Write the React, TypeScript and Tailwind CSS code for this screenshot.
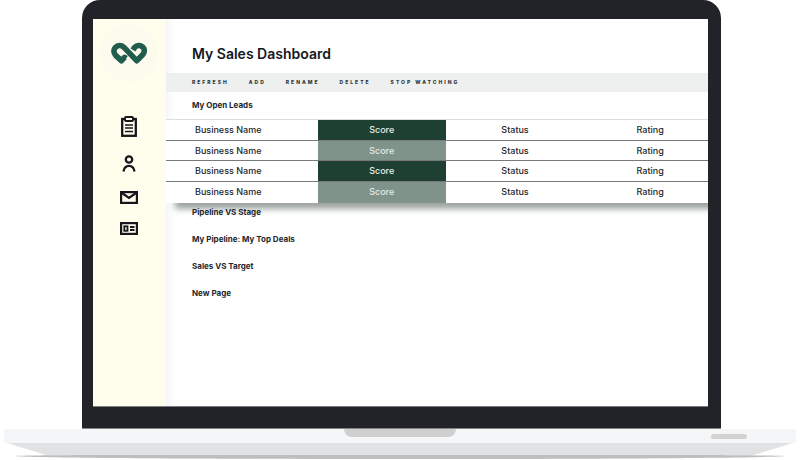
import React from "react";

const actions = ["Refresh", "Add", "Rename", "Delete", "Stop watching"];
const pages = ["Pipeline VS Stage", "My Pipeline: My Top Deals", "Sales VS Target", "New Page"];
const rows = [0, 1, 2, 3];

function Logo() {
  return (
    <svg width="36" height="22" viewBox="0 0 108 66" fill="none" stroke="#215c4d" strokeWidth="17" aria-label="Company logo" role="img">
      <path d="M46 49 L41 46 L31 56 L14 40 C-1 23 20 0 39 16 L77 56 L95 38 C110 20 87 0 70 17 L66 24" strokeLinejoin="round" />
    </svg>
  );
}

function ClipboardIcon() {
  return (
    <svg width="16" height="21" viewBox="0 0 16 21" fill="none" stroke="#15171c" aria-hidden="true">
      <rect x="1.200" y="3" width="13.600" height="16.800" strokeWidth="2.300" />
      <rect x="4" y="1" width="8" height="4" rx="1" fill="#fffdeb" strokeWidth="1.900" />
      <path d="M4 9h8M4 12h8M4 15.500h8" strokeWidth="1.600" />
    </svg>
  );
}

function PersonIcon() {
  return (
    <svg width="14" height="17" viewBox="0 0 14 17" fill="none" stroke="#15171c" strokeWidth="2.300" aria-hidden="true">
      <circle cx="7" cy="4.500" r="3.200" />
      <path d="M1.500 16.500 C2.500 9 11.500 9 12.500 16.500" />
    </svg>
  );
}

function MailIcon() {
  return (
    <svg width="18" height="13" viewBox="0 0 18 13" fill="none" stroke="#15171c" strokeWidth="2.200" aria-hidden="true">
      <rect x="1.100" y="1.100" width="15.800" height="10.800" />
      <path d="M2 2 L9 7 L16 2" />
    </svg>
  );
}

function CardIcon() {
  return (
    <svg width="18" height="13" viewBox="0 0 18 13" fill="none" stroke="#15171c" aria-hidden="true">
      <rect x="1.100" y="1.100" width="15.800" height="10.800" strokeWidth="2.200" />
      <rect x="4.300" y="4.300" width="3.200" height="4.500" strokeWidth="1.800" />
      <path d="M10 5h4.500M10 8h4.500" strokeWidth="1.800" />
    </svg>
  );
}

function Sidebar() {
  return (
    <aside className="flex w-[73px] shrink-0 flex-col items-center bg-[#fffdeb] pt-[5px] pr-[2px]">
      <div className="flex size-[58px] items-center justify-center rounded-full bg-[#fdfbee]">
        <Logo />
      </div>
      <nav className="flex flex-col items-center pt-[34px]" aria-label="Main">
        <button type="button" aria-label="Tasks" className="flex h-[21px] items-center"><ClipboardIcon /></button>
        <button type="button" aria-label="Contacts" className="mt-[18px] flex h-[17px] items-center"><PersonIcon /></button>
        <button type="button" aria-label="Mail" className="mt-[19px] flex h-[13px] items-center"><MailIcon /></button>
        <button type="button" aria-label="Accounts" className="mt-[18px] flex h-[13px] items-center"><CardIcon /></button>
      </nav>
    </aside>
  );
}

function LeadsTable() {
  return (
    <table className="w-full table-fixed border-collapse bg-white text-[9px] leading-[18px] font-medium text-[#23262d] shadow-[8px_7px_6px_-1px_rgba(60,75,68,0.5)]">
      <colgroup>
        <col className="w-[28%]" />
        <col className="w-[23.600%]" />
        <col className="w-[25.600%]" />
        <col />
      </colgroup>
      <tbody>
        {rows.map((row) => (
          <tr key={row} className="h-[21px] border-t border-[#77797b] first:border-[#dcdedd] nth-2:h-[20px]">
            <td className="p-0 pl-[29px]">Business Name</td>
            <td className={row % 2 === 0 ? "bg-[#1d4033] p-0 text-center text-[#e8eeea]" : "bg-[#80938b] p-0 text-center text-[#e3e9e5]"}>Score</td>
            <td className="p-0 text-center">Status</td>
            <td className="p-0 pl-[8px] text-center">Rating</td>
          </tr>
        ))}
      </tbody>
    </table>
  );
}

function Dashboard() {
  return (
    <main className="min-w-0 flex-1 bg-white bg-linear-to-r from-[#f6f6f6] to-white to-[8px]">
      <h1 className="pt-[25px] pl-[26px] text-[14px] leading-[20px] font-semibold text-[#15171e]">My Sales Dashboard</h1>
      <div className="mt-[9px] flex h-[19px] items-center gap-[20px] bg-[#edf0ef] pb-[2px] pl-[26px]" role="toolbar" aria-label="Dashboard actions">
        {actions.map((action) => (
          <button key={action} type="button" className="text-[5px] leading-[8px] font-extrabold tracking-[2px] text-[#30363a] uppercase">
            {action}
          </button>
        ))}
      </div>
      <h2 className="pl-[26px] text-[8px] leading-[27px] font-bold text-[#23262d]">My Open Leads</h2>
      <LeadsTable />
      <ul className="relative flex flex-col gap-[10px] pt-px pl-[26px] text-[8px] leading-[17px] font-bold text-[#23262d]">
        {pages.map((page) => (
          <li key={page}><a href="#" className="block">{page}</a></li>
        ))}
      </ul>
    </main>
  );
}

function LaptopBase() {
  return (
    <div className="px-1">
      <div className="grid h-[14px] grid-cols-[1fr_112px_1fr] items-start bg-[#f5f6f8]">
        <div className="col-start-2 h-[8px] rounded-b-[8px] bg-[#cfcfcf]" />
        <div className="flex justify-end pt-[5px] pr-[49px]">
          <div className="h-[5px] w-9 rounded-full bg-[#d2d2d3]" />
        </div>
      </div>
      <svg className="block h-4 w-full" viewBox="0 0 792 16" preserveAspectRatio="none" aria-hidden="true">
        <path d="M11 13 C40 11 752 11 781 13 C752 17 40 17 11 13Z" fill="#bfbdbd" />
        <path d="M3 0H789L750 12H42Z" fill="#e1e2e4" />
      </svg>
    </div>
  );
}

export default function App() {
  return (
    <div className="overflow-hidden bg-white font-['Inter','Liberation_Sans',sans-serif]">
      <div className="pr-[79px] pl-[82px]">
        <div className="rounded-t-[18px] border-b border-[#85868a] bg-[#222329] pt-[19px] pr-[13px] pb-[21px] pl-[11px]">
          <div className="flex min-h-[388px] overflow-hidden border-b border-[#7b7c7f]">
            <Sidebar />
            <Dashboard />
          </div>
        </div>
      </div>
      <LaptopBase />
    </div>
  );
}
